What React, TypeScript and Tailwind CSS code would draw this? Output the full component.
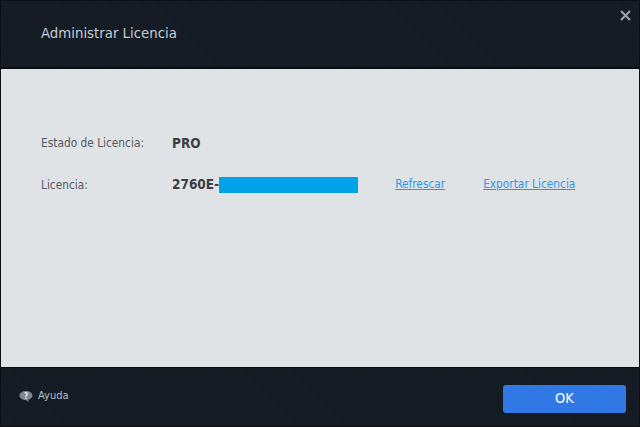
import React from "react";

const Row = ({ label, children }: { label: string; children: React.ReactNode }) => (
  <div className="flex items-center h-[20px]">
    <div className="w-[131px] mt-[1px] text-[11.8px] text-[#55585e]">{label}</div>
    {children}
  </div>
);

const LinkText = ({ children }: { children: React.ReactNode }) => (
  <a href="#" className="text-[11.8px] text-[#2f96e6] underline">
    {children}
  </a>
);

export default function App() {
  return (
    <div className="w-[640px] h-[427px] flex flex-col bg-[repeating-linear-gradient(45deg,#141a22_0px,#141a22_1px,#171d26_1px,#171d26_2px)] border border-[#0c0f14] overflow-hidden font-['DejaVu_Sans_Condensed','DejaVu_Sans',sans-serif]">
      {/* Title bar */}
      <div className="relative h-[68px] flex items-center pl-[40px] pb-[2px] border-b-2 border-[#0a0d11] shrink-0">
        <span className="text-[14.8px] text-[#c3ccd8]">Administrar Licencia</span>
        <button className="absolute top-[9px] right-[8px] text-[#9ea3ab]" aria-label="Cerrar">
          <svg width="11" height="11" viewBox="0 0 11 11" fill="none" stroke="currentColor" strokeWidth="2">
            <path d="M1 1l9 9M10 1l-9 9" />
          </svg>
        </button>
      </div>

      {/* Body */}
      <div className="h-[298px] shrink-0 bg-[#e0e3e6] pl-[40px] pt-[64px] flex flex-col gap-[22px]">
        <Row label="Estado de Licencia:">
          <span className="text-[13.500px] font-bold text-[#3b3e44]">PRO</span>
        </Row>
        <Row label="Licencia:">
          <span className="-mt-[1px] text-[13.500px] font-bold text-[#3b3e44]">2760E-</span>
          <span className="w-[139px] h-[16px] bg-[#00a2e8]" />
          <div className="ml-[37px] flex gap-[38px]">
            <LinkText>Refrescar</LinkText>
            <LinkText>Exportar Licencia</LinkText>
          </div>
        </Row>
      </div>

      {/* Footer */}
      <div className="flex-1 flex justify-between pl-[18px] pr-[13px] border-t border-[#0a0d11]">
        <div className="flex items-center gap-[5px] h-[13px] mt-[22px]">
          <svg width="14" height="13" viewBox="0 0 14 13">
            <path d="M7 1C3.4 1 .5 2.8.5 5.5S3.400 10 7 10l2.500 2V9.700c2.400-.7 4-2.300 4-4.200C13.500 2.800 10.600 1 7 1z" fill="#7c8594" />
            <text x="7" y="8.500" textAnchor="middle" fontSize="8" fontWeight="700" fill="#e8eaed">?</text>
          </svg>
          <span className="text-[11px] text-[#b6bfca]">Ayuda</span>
        </div>
        <button className="w-[123px] h-[28px] mt-[17px] rounded-[3px] bg-[#2f78e6] text-[14.500px] text-white">OK</button>
      </div>
    </div>
  );
}
